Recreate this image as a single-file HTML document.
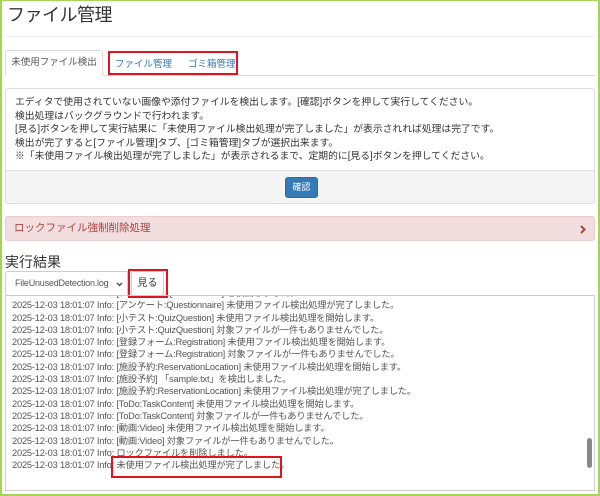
<!DOCTYPE html>
<html><head><meta charset="utf-8"><style>
*{box-sizing:border-box;margin:0;padding:0}
body{width:600px;height:496px;overflow:hidden;background:#fff;font-family:"Liberation Sans","Noto Sans CJK JP",sans-serif;color:#333;position:relative}
.frame{position:absolute;left:0;top:0;width:600px;height:496px;border:2px solid #a6d45a;border-top-width:1px}
h1{position:absolute;left:7px;top:4px;font-size:18px;line-height:22px;font-weight:normal;color:#333;letter-spacing:-0.5px}
.hr{position:absolute;left:5px;right:5px;top:36px;height:1px;background:#eee}
.tabline{position:absolute;left:5px;right:5px;top:75px;height:1px;background:#ddd}
.tab{position:absolute;left:5px;top:50px;width:98px;height:26px;border:1px solid #ddd;border-bottom-color:#fff;background:#fff;border-radius:3px 3px 0 0;font-size:9.5px;line-height:24px;text-align:center;color:#555}
.link{position:absolute;top:56px;font-size:9.5px;color:#337ab7}
.red{position:absolute;border:2px solid #e0141e}
.panel{position:absolute;left:5px;top:88px;width:590px;height:116px;border:1px solid #ddd;border-radius:3px;overflow:hidden}
.ptext{padding:7px 0 0 9px;font-size:9.8px;line-height:13.6px;color:#333}
.pfoot{position:absolute;left:0;right:0;bottom:0;height:33px;background:#f5f5f5;border-top:1px solid #ddd}
.btn{position:absolute;left:279px;top:6px;width:33px;height:21px;background:#337ab7;border:1px solid #2e6da4;border-radius:3px;color:#fff;font-size:9px;line-height:19px;text-align:center}
.lock{position:absolute;left:5px;top:216px;width:590px;height:25px;background:#f2dede;border:1px solid #ebccd1;border-radius:3px;color:#a94442;font-size:10.5px;line-height:23px;padding-left:8px}
.lock svg{position:absolute;right:8px;top:8px}
h3{position:absolute;left:5px;top:252px;font-size:14px;font-weight:normal;color:#333}
.sel{position:absolute;left:5px;top:271px;width:123px;height:25px;border:1px solid #ccc;border-radius:3px 0 0 3px;font-size:9px;line-height:23px;padding-left:9px;color:#555;letter-spacing:-0.2px}
.sel svg{position:absolute;right:4px;top:10px}
.see{position:absolute;left:131px;top:271px;width:33px;height:25px;border:1px solid #ccc;border-radius:3px;font-size:10px;line-height:23px;text-align:center;color:#333}
.ta{position:absolute;left:5px;top:295px;width:590px;height:196px;border:1px solid #ccc;overflow:hidden}
.log{position:absolute;left:6px;top:-9px;font-size:9.3px;color:#555;white-space:nowrap;letter-spacing:-0.2px}
.log div{height:12.3px;line-height:12.3px}
.sb{position:absolute;right:0;top:0;width:12px;height:194px;background:#fff}
.thumb{position:absolute;right:2px;top:142px;width:5px;height:30px;background:#888;border-radius:3px}
</style></head><body>
<div class="frame"></div>
<h1>ファイル管理</h1>
<div class="hr"></div>
<div class="tabline"></div>
<div class="tab">未使用ファイル検出</div>
<div class="link" style="left:115px">ファイル管理</div>
<div class="link" style="left:188px">ゴミ箱管理</div>
<div class="red" style="left:108px;top:51px;width:130px;height:24px"></div>
<div class="panel">
<div class="ptext">エディタで使用されていない画像や添付ファイルを検出します。[確認]ボタンを押して実行してください。<br>検出処理はバックグラウンドで行われます。<br>[見る]ボタンを押して実行結果に「未使用ファイル検出処理が完了しました」が表示されれば処理は完了です。<br>検出が完了すると[ファイル管理]タブ、[ゴミ箱管理]タブが選択出来ます。<br>※「未使用ファイル検出処理が完了しました」が表示されるまで、定期的に[見る]ボタンを押してください。</div>
<div class="pfoot"><div class="btn">確認</div></div>
</div>
<div class="lock">ロックファイル強制削除処理<svg width="6" height="9" viewBox="0 0 6 9"><path d="M1 1 L4.5 4.5 L1 8" stroke="#a94442" stroke-width="2" fill="none"/></svg></div>
<h3>実行結果</h3>
<div class="sel">FileUnusedDetection.log<svg width="7" height="5" viewBox="0 0 7 5"><path d="M1 1 L3.5 3.5 L6 1" stroke="#444" stroke-width="1.3" fill="none"/></svg></div>
<div class="see">見る</div>
<div class="red" style="left:128px;top:269px;width:40px;height:29px"></div>
<div class="ta">
<div class="log">
<div>2025-12-03 18:01:07 Info: [アンケート:Questionnaire] を検出しました。</div>
<div>2025-12-03 18:01:07 Info: [アンケート:Questionnaire] 未使用ファイル検出処理が完了しました。</div>
<div>2025-12-03 18:01:07 Info: [小テスト:QuizQuestion] 未使用ファイル検出処理を開始します。</div>
<div>2025-12-03 18:01:07 Info: [小テスト:QuizQuestion] 対象ファイルが一件もありませんでした。</div>
<div>2025-12-03 18:01:07 Info: [登録フォーム:Registration] 未使用ファイル検出処理を開始します。</div>
<div>2025-12-03 18:01:07 Info: [登録フォーム:Registration] 対象ファイルが一件もありませんでした。</div>
<div>2025-12-03 18:01:07 Info: [施設予約:ReservationLocation] 未使用ファイル検出処理を開始します。</div>
<div>2025-12-03 18:01:07 Info: [施設予約] 「sample.txt」を検出しました。</div>
<div>2025-12-03 18:01:07 Info: [施設予約:ReservationLocation] 未使用ファイル検出処理が完了しました。</div>
<div>2025-12-03 18:01:07 Info: [ToDo:TaskContent] 未使用ファイル検出処理を開始します。</div>
<div>2025-12-03 18:01:07 Info: [ToDo:TaskContent] 対象ファイルが一件もありませんでした。</div>
<div>2025-12-03 18:01:07 Info: [動画:Video] 未使用ファイル検出処理を開始します。</div>
<div>2025-12-03 18:01:07 Info: [動画:Video] 対象ファイルが一件もありませんでした。</div>
<div>2025-12-03 18:01:07 Info: ロックファイルを削除しました。</div>
<div>2025-12-03 18:01:07 Info: 未使用ファイル検出処理が完了しました。</div>
</div>
<div class="sb"><div class="thumb"></div></div>
</div>
<div class="red" style="left:111px;top:456px;width:171px;height:22px"></div>
</body></html>
